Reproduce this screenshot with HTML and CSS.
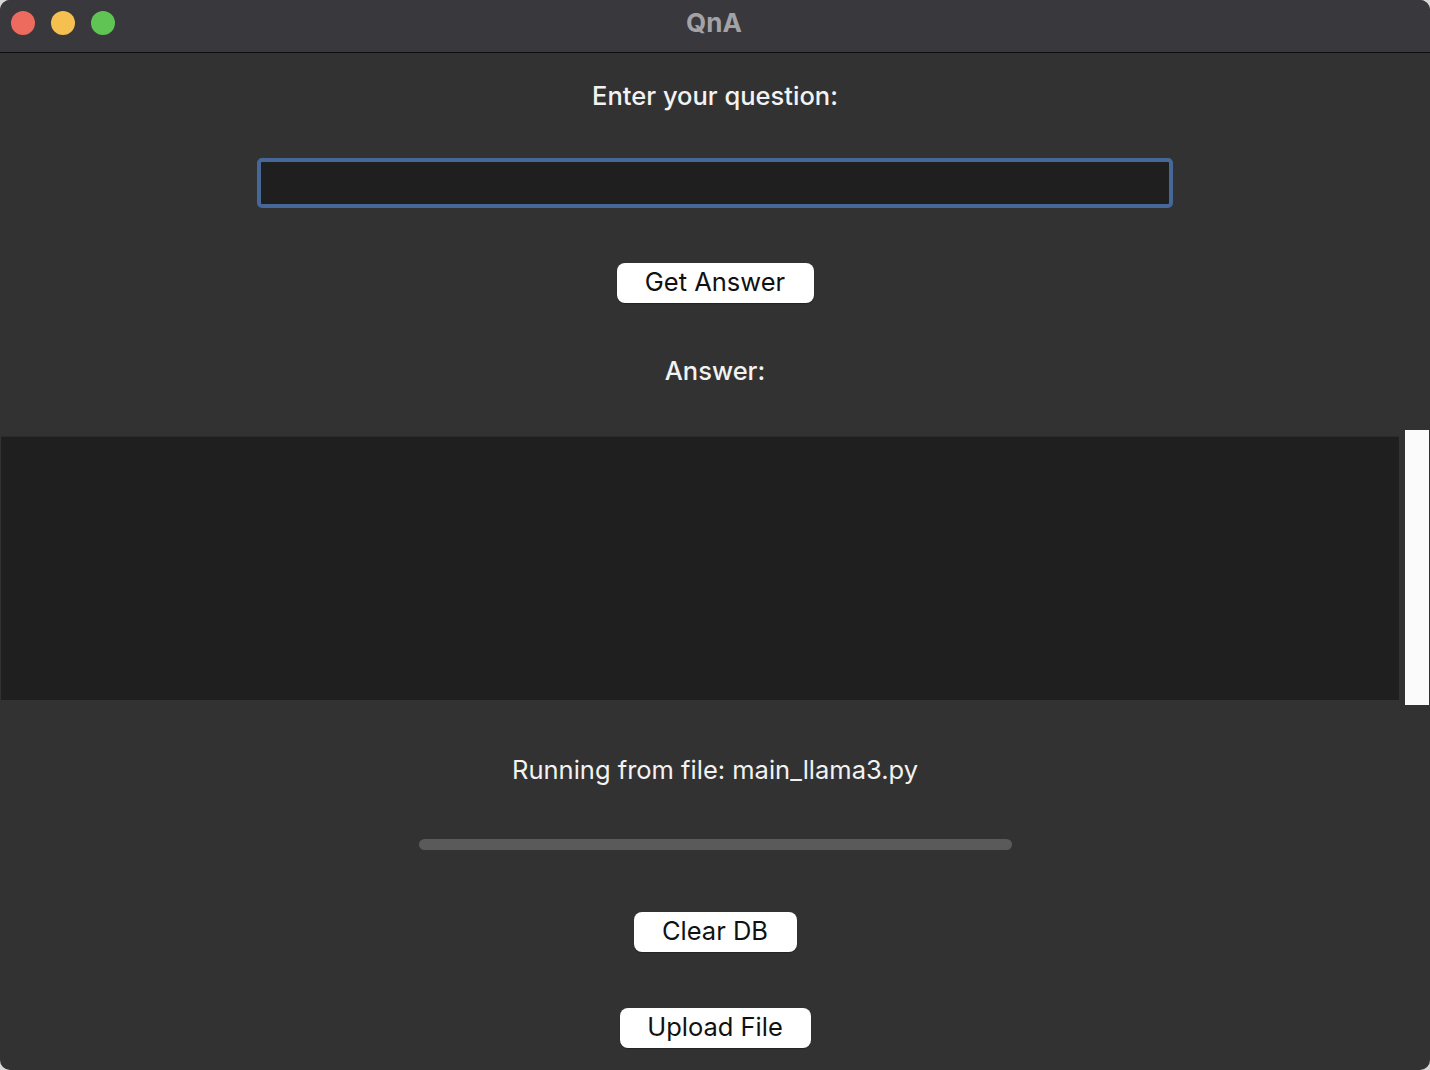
FILE: index.html
```html
<!DOCTYPE html>
<html>
<head>
<meta charset="utf-8">
<title>QnA</title>
<link rel="stylesheet" href="styles.css">
</head>
<body>
<div class="window">
  <div class="titlebar">
    <div class="lights">
      <span class="light red"></span>
      <span class="light yellow"></span>
      <span class="light green"></span>
    </div>
    <div class="title">QnA</div>
  </div>
  <div class="content">
    <div class="label label-question">Enter your question:</div>
    <div class="input"></div>
    <button class="btn btn-get">Get Answer</button>
    <div class="label label-answer">Answer:</div>
    <div class="answer-row">
      <div class="answer-box"></div>
      <div class="scrollbar"></div>
    </div>
    <div class="label label-running">Running from file: main_llama3.py</div>
    <div class="progress"></div>
    <button class="btn btn-clear">Clear DB</button>
    <button class="btn btn-upload">Upload File</button>
  </div>
</div>
</body>
</html>
```
FILE: styles.css
```css
html, body {
  margin: 0;
  padding: 0;
  background: #d8d8d8;
}
body {
  width: 1430px;
  height: 1070px;
  overflow: hidden;
  font-family: Inter, "Noto Sans", "Liberation Sans", sans-serif;
}
.window {
  width: 1430px;
  height: 1070px;
  border-radius: 10px;
  overflow: hidden;
  background: #323232;
  display: flex;
  flex-direction: column;
}
.titlebar {
  height: 52px;
  flex: none;
  background: #39383d;
  border-bottom: 1px solid #0c0c0c;
  position: relative;
  display: flex;
  align-items: center;
  justify-content: center;
}
.lights {
  position: absolute;
  left: 11px;
  top: 11px;
  display: flex;
  gap: 16px;
}
.light {
  width: 24px;
  height: 24px;
  border-radius: 50%;
  display: block;
}
.red { background: #ed6a5e; }
.yellow { background: #f5c04f; }
.green { background: #5fc454; }
.title {
  color: #a3a2a7;
  font-weight: 700;
  font-size: 26px;
  line-height: 30px;
  margin-top: -7px;
  margin-left: -2px;
}
.content {
  display: flex;
  flex-direction: column;
  align-items: center;
}
.label {
  color: #f2f2f2;
  font-size: 25.5px;
  line-height: 30px;
  font-weight: 500;
}
.label-question { margin-top: 28px; }
.input {
  margin-top: 47px;
  width: 908px;
  height: 42px;
  border: 4px solid #466898;
  border-radius: 5px;
  background: #1f1f1f;
}
.btn {
  background: #ffffff;
  border: none;
  border-radius: 8px;
  height: 40px;
  font-family: Inter, "Noto Sans", "Liberation Sans", sans-serif;
  font-size: 25.5px;
  color: #111111;
  padding: 0 0 3px 0;
  box-shadow: 0 1px 1px rgba(0,0,0,0.3);
}
.btn-get { margin-top: 55px; width: 197px; }
.label-answer { margin-top: 53px; }
.answer-row {
  margin-top: 44px;
  width: 1430px;
  height: 275px;
  display: flex;
  align-items: center;
  gap: 6px;
}
.answer-box {
  width: 1398px;
  height: 263px;
  margin-left: 1px;
  background: #1f1f1f;
  border-top: 1px solid #2b2b2b;
}
.scrollbar {
  width: 24px;
  height: 275px;
  background: #fbfbfb;
}
.label-running { margin-top: 50px; font-weight: 400; }
.progress {
  margin-top: 54px;
  width: 593px;
  height: 11px;
  border-radius: 6px;
  background: #5a5a5a;
}
.btn-clear { margin-top: 62px; width: 163px; }
.btn-upload { margin-top: 56px; width: 191px; }
```
